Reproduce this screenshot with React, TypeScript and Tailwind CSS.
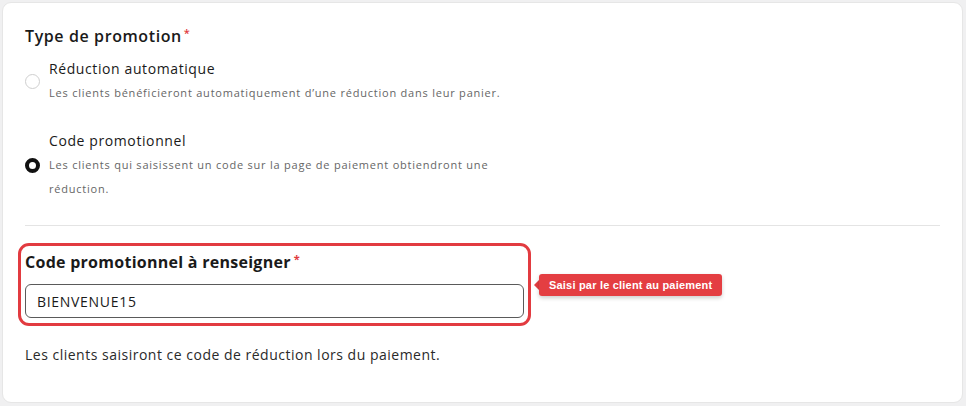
import React from "react";

function Radio({ checked }: { checked: boolean }) {
  return checked ? (
    <span className="block w-[15px] h-[15px] shrink-0 rounded-full border-[4px] border-[#111111] bg-white" />
  ) : (
    <span className="block w-[15px] h-[15px] shrink-0 rounded-full border border-[#cfcfcf] bg-white" />
  );
}

export default function App() {
  return (
    <div
      className="w-[966px] h-[406px] bg-[#f0f0f1] p-[2px] pr-[3px]"
      style={{ fontFamily: '"Open Sans", "Liberation Sans", sans-serif' }}
    >
      <div className="h-[401px] bg-white rounded-[9px] border border-[#e6e6e6] px-[22px] pt-[21px]">
        <div className="flex items-start text-[16px] leading-6 font-semibold text-[#1a1a1a] tracking-[0.6px]">
          <span>Type de promotion</span>
          <span className="text-[#e0393e] text-[11px] leading-4 ml-[2px] mt-[1px]">*</span>
        </div>

        <div className="mt-[9px] flex items-center gap-[9px]">
          <Radio checked={false} />
          <div>
            <div className="text-[14px] leading-6 text-[#1a1a1a] tracking-[0.6px]">Réduction automatique</div>
            <div className="text-[11px] leading-6 text-[#666666] tracking-[0.78px]">
              Les clients bénéficieront automatiquement d’une réduction dans leur panier.
            </div>
          </div>
        </div>

        <div className="mt-[24px] flex items-center gap-[9px]">
          <Radio checked={true} />
          <div>
            <div className="text-[14px] leading-6 text-[#1a1a1a] tracking-[0.6px]">Code promotionnel</div>
            <div className="text-[11px] leading-6 text-[#666666] tracking-[0.78px]">
              Les clients qui saisissent un code sur la page de paiement obtiendront une
              <br />
              réduction.
            </div>
          </div>
        </div>

        <div className="mt-[24px] h-px bg-[#e4e4e4]" />

        <div className="relative mt-[17px] -ml-[7px] w-[513px] rounded-[11px] border-[3px] border-[#e23b40] pl-[4px] pr-[4px] pt-[4px] pb-[5px]">
          <div className="flex items-start text-[16px] leading-6 font-bold text-[#1a1a1a] tracking-[0.27px]">
            <span>Code promotionnel à renseigner</span>
            <span className="text-[#e0393e] text-[11px] leading-4 ml-[3px] mt-[1px]">*</span>
          </div>
          <div className="mt-[10px] h-[34px] rounded-[6px] border border-[#5a5a5a] flex items-center px-[11px] text-[14px] text-[#1a1a1a] tracking-[0.7px]">
            BIENVENUE15
          </div>

          <div className="absolute left-[513px] top-[28px] flex items-center">
            <span className="w-0 h-0 border-y-[5px] border-y-transparent border-r-[5px] border-r-[#e43e42]" />
            <span
              className="h-[22px] flex items-center rounded-[3px] bg-[#e43e42] px-[10px] text-[11px] font-bold text-white whitespace-nowrap tracking-[0.2px] shadow-[0_2px_4px_rgba(0,0,0,0.2)]"
              style={{ fontFamily: '"Liberation Sans", Arial, sans-serif' }}
            >
              Saisi par le client au paiement
            </span>
          </div>
        </div>

        <div className="mt-[19px] text-[14px] leading-5 text-[#2a2a2a] tracking-[0.5px]">
          Les clients saisiront ce code de réduction lors du paiement.
        </div>
      </div>
    </div>
  );
}
